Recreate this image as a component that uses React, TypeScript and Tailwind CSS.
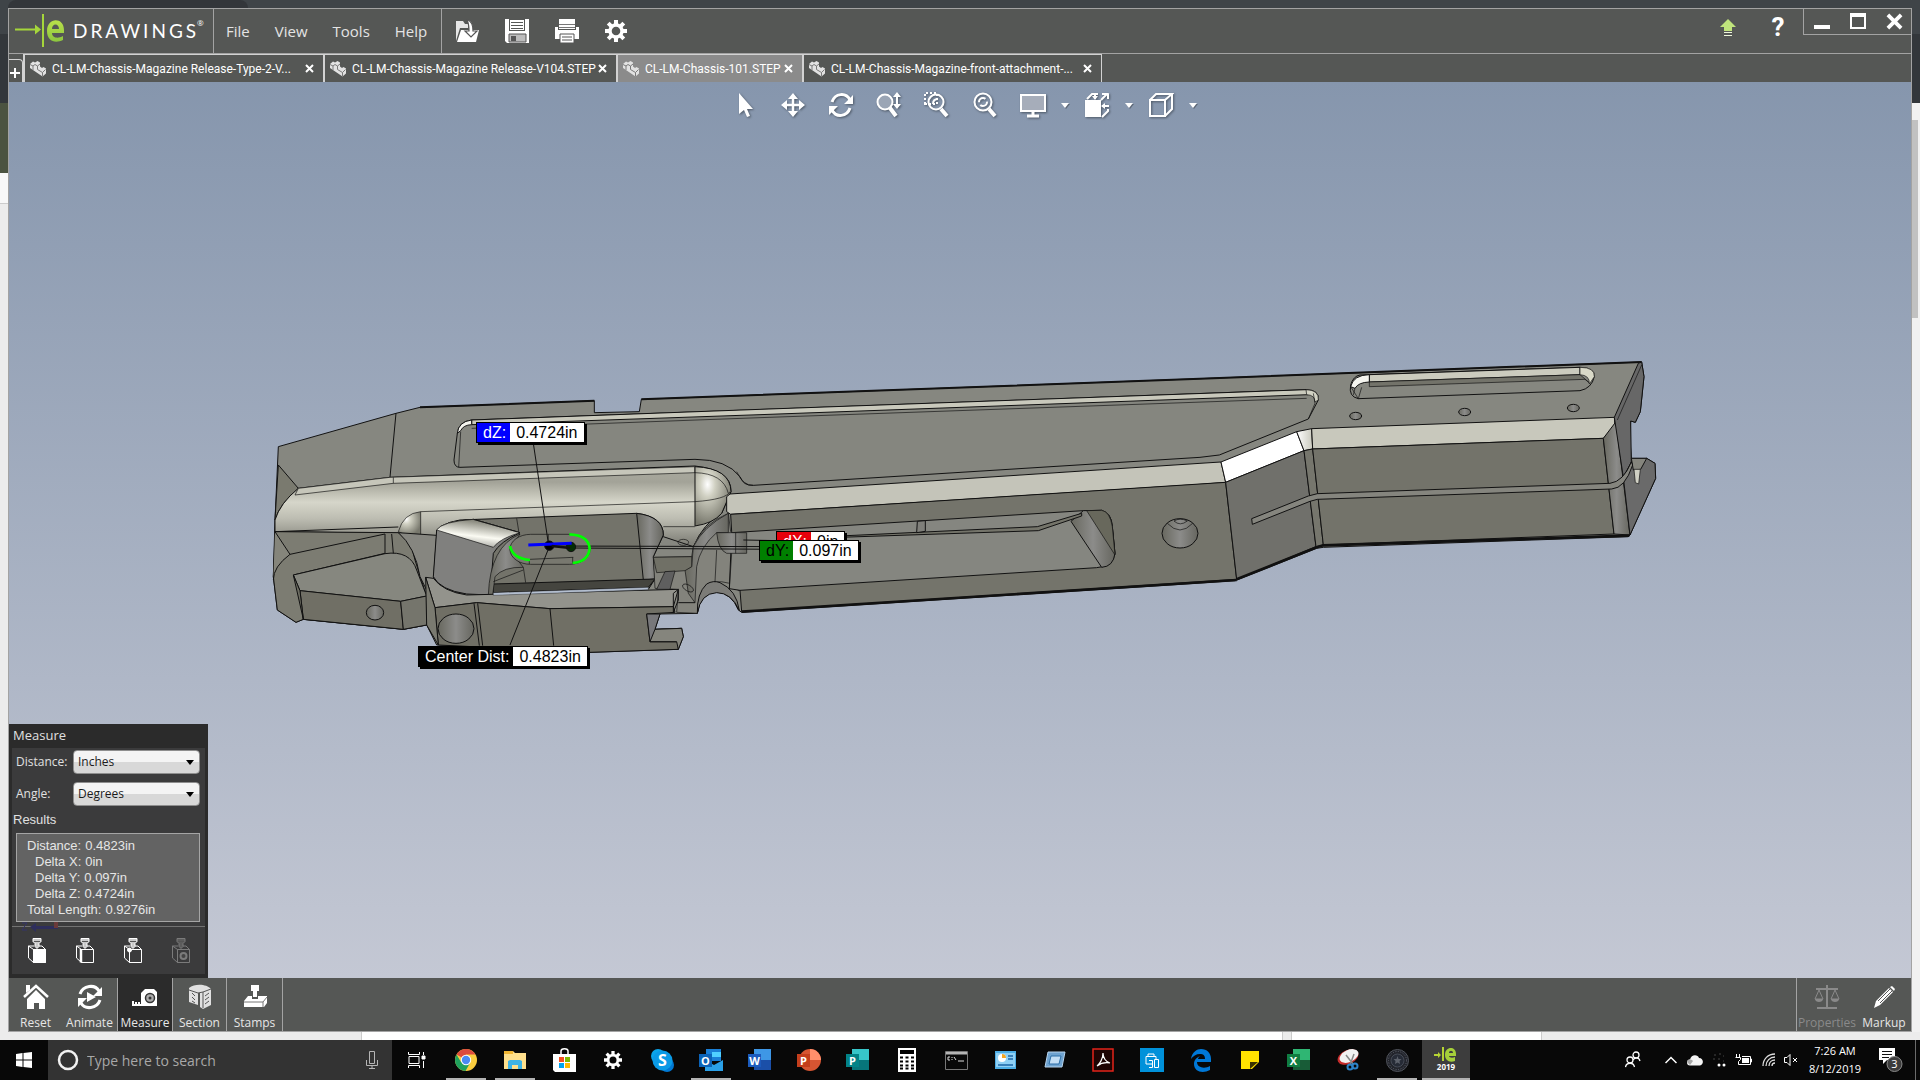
import { useState } from 'react';
import type { ReactNode } from 'react';

const tabs = [
  { name: 'CL-LM-Chassis-Magazine Release-Type-2-V...', width: 'w-[300px]' },
  { name: 'CL-LM-Chassis-Magazine Release-V104.STEP', width: 'w-[293px]' },
  { name: 'CL-LM-Chassis-101.STEP', width: 'w-[186px]' },
  { name: 'CL-LM-Chassis-Magazine-front-attachment-...', width: 'w-[299px]' },
];

function Logo() {
  return (
    <div className="flex w-[205px] items-center gap-2 border-r border-[#a3a3a3] pl-1.5">
      <svg width="50" height="36" viewBox="0 0 50 36">
        <defs>
          <linearGradient id="leaf" x1="0" y1="0" x2="0" y2="1">
            <stop offset="0" stopColor="#b9e04a" />
            <stop offset="1" stopColor="#8cc63f" />
          </linearGradient>
        </defs>
        <path d="M0 15.500h20v-4l6 5-6 5v-4H0z" fill="#a5d63b" />
        <path d="M27 1h2v33h-2z" fill="#a5d63b" />
        <path
          d="M48 23v4c-8 4-16 1-16-9C32 4 49 4 49 17v3H37c0 5 6 6 11 3zM37 16h7c0-6-7-6-7 0z"
          fill="url(#leaf)"
          fillRule="evenodd"
        />
      </svg>
      <span className="font-['Lato',sans-serif] text-[19px] leading-6 tracking-[3px] text-white">
        DRAWINGS
      </span>
      <span className="-ml-2.5 self-start pt-2 text-[8px] text-white">®</span>
    </div>
  );
}

function PartIcon() {
  return (
    <svg width="17" height="17" viewBox="0 0 17 17" className="shrink-0">
      <path d="M1 4l3-2.500 2 1L8.500 1 11 2.500v4L13 8l1.500-1L17 8.500v5L13.500 16.500 1 8z" fill="#e2e2e2" />
      <path d="M1 4.500l3 1.500 2-1.500M4 6v4M6 4.500L8.500 6 11 4M8.500 6v3.500l5 3 3-3M13.500 12.500v4" fill="none" stroke="#7a7a7a" />
    </svg>
  );
}

function CloseMark({ size = 9, thick = 2 }: { size?: number; thick?: number }) {
  return (
    <svg width={size} height={size} viewBox="0 0 9 9">
      <path d="M1 1l7 7M8 1l-7 7" stroke="#fff" strokeWidth={thick} fill="none" />
    </svg>
  );
}

function GearIcon({ size = 22 }: { size?: number }) {
  return (
    <svg width={size} height={size} viewBox="0 0 22 22">
      <circle cx="11" cy="11" r="6" fill="none" stroke="#fff" strokeWidth="3.400" />
      <g stroke="#fff" strokeWidth="4">
        <path d="M11 0v4M11 18v4M0 11h4M18 11h4M3.200 3.200l3 3M15.800 15.800l3 3M18.800 3.200l-3 3M3.200 18.800l3-3" />
      </g>
    </svg>
  );
}

function Header() {
  return (
    <header className="flex h-[45px] shrink-0 border-b border-[#a3a3a3]">
      <Logo />
      <nav className="flex w-[228px] items-center gap-[25px] border-r border-[#a3a3a3] pl-3 text-[15px] text-[#e4e4e4]">
        <button>File</button>
        <button>View</button>
        <button>Tools</button>
        <button>Help</button>
      </nav>
      <div className="flex items-center gap-[26px] pl-[13px]">
        <button aria-label="Open">
          <svg width="24" height="24" viewBox="0 0 24 24">
            <path d="M1 22V2h7l2 3h3v4H5z" fill="#e6e6e6" />
            <path d="M2 23l4-12h18l-3 12z" fill="#fff" />
            <path d="M12 1c5 1 6 5 6 11h4l-6 6-6-6h4c0-5 0-7-2-11z" fill="#fff" stroke="#555" strokeWidth="1.200" />
          </svg>
        </button>
        <button aria-label="Save">
          <svg width="24" height="24" viewBox="0 0 24 24">
            <path d="M0 0h24v24H2l-2-2z" fill="#fff" />
            <path d="M4 0h16v12H4z" fill="#555755" />
            <path d="M5 1h14v10H5z" fill="#fff" />
            <path d="M6 3.500h12M6 6.500h12M6 9.500h12" stroke="#555755" />
            <path d="M4 15h17v8H4z" fill="#bcbcbc" stroke="#555" />
            <path d="M6 17h5v5H6z" fill="#555" />
          </svg>
        </button>
        <button aria-label="Print">
          <svg width="24" height="24" viewBox="0 0 24 24">
            <path d="M4 0h16v10H4z" fill="#fff" />
            <path d="M4 5.500h16M4 8.500h16" stroke="#777" />
            <path d="M0 8h3v3h18V8h3v12H0z" fill="#fff" />
            <path d="M5 15h14v9H5z" fill="#fff" stroke="#555" />
            <path d="M7 18h10M7 21h10" stroke="#555" />
          </svg>
        </button>
        <button aria-label="Options">
          <GearIcon />
        </button>
      </div>
      <div className="ml-auto flex">
        <button aria-label="Update" className="flex w-[50px] items-start justify-center pt-2.5">
          <svg width="16" height="18" viewBox="0 0 16 18">
            <path d="M8 0l8 8h-4v4H4V8H0z" fill="#c0e47c" />
            <path d="M4 13.500h8M4 16.500h8" stroke="#eef6dd" />
          </svg>
        </button>
        <button className="w-[50px] self-start pt-0.5 font-['Roboto',sans-serif] text-[26px] leading-8 font-bold text-white">
          ?
        </button>
        <div className="flex h-[26px] items-start gap-5 border-b border-l border-[#a3a3a3] pt-1 pr-2 pl-2.5">
          <button aria-label="Minimize">
            <svg width="16" height="16"><path d="M0 12h16v4H0z" fill="#fff" /></svg>
          </button>
          <button aria-label="Maximize">
            <svg width="16" height="16"><path d="M0 0h16v16H0zM2 4v10h12V4z" fill="#fff" fillRule="evenodd" /></svg>
          </button>
          <button aria-label="Close">
            <CloseMark size={17} thick={2} />
          </button>
        </div>
      </div>
    </header>
  );
}

function TabBar() {
  const [active, setActive] = useState(2);
  return (
    <div className="flex h-7 shrink-0 items-end">
      <button
        aria-label="New tab"
        className="flex h-[23px] w-3.5 items-center justify-center rounded-tr border-t border-r border-[#d2d2d2] pt-1 pr-0.5"
      >
        <svg width="10" height="10"><path d="M4 0h2v4h4v2H6v4H4V6H0V4h4z" fill="#fff" /></svg>
      </button>
      {tabs.map((tab, i) => (
        <div
          key={tab.name}
          className={`${tab.width} flex h-7 items-center gap-1.5 border-t border-l-2 border-[#d2d2d2] pr-[9px] pl-1 ${
            i === active ? 'bg-[#8b8b8b]' : ''
          }`}
        >
          <PartIcon />
          <button
            onClick={() => setActive(i)}
            className="min-w-0 grow text-left font-['Roboto',sans-serif] text-[12px] leading-4 whitespace-nowrap text-white"
          >
            {tab.name}
          </button>
          <button aria-label={`Close ${tab.name}`}>
            <CloseMark />
          </button>
        </div>
      ))}
      <div className="h-7 border-l border-[#d2d2d2]" />
    </div>
  );
}

function Caret() {
  return (
    <svg width="8" height="5" viewBox="0 0 8 5" className="drop-shadow-[1px_1px_0_#5d6877]">
      <path d="M0 0h8L4 5z" fill="#fff" />
    </svg>
  );
}

function ViewButton({ label, children }: { label: string; children: ReactNode }) {
  return (
    <button aria-label={label} className="drop-shadow-[1px_1px_1px_#4d5866]">
      <svg width="26" height="26" viewBox="0 0 26 26" fill="none" stroke="#fff" strokeWidth="2">
        {children}
      </svg>
    </button>
  );
}

function ViewToolbar() {
  return (
    <div className="z-10 col-start-1 row-start-1 flex items-center justify-center self-start pt-2.5 pl-6">
      <div className="flex items-center gap-[22px]">
        <ViewButton label="Select">
          <path d="M7 1v21l5-4 3 7 3-1-3-7h6z" fill="#fff" stroke="none" />
        </ViewButton>
        <ViewButton label="Pan">
          <path d="M13 4v18M4 13h18" strokeWidth="2.500" />
          <path d="M13 1l5 6H8zM13 25l5-6H8zM1 13l6-5v10zM25 13l-6-5v10z" fill="#fff" stroke="none" />
        </ViewButton>
        <ViewButton label="Rotate">
          <path d="M4 10C7 1 18 0 22 8M22 16c-3 9-14 10-18 2" strokeWidth="3" />
          <path d="M25 3v9h-9zM1 23v-9h9z" fill="#fff" stroke="none" />
        </ViewButton>
        <ViewButton label="Zoom">
          <circle cx="9" cy="10" r="7.500" fill="#9aa5b5" />
          <path d="M14 16l6 8" strokeWidth="4" />
          <path d="M21 4v9" />
          <path d="M21 0l4 5h-8zM21 17l4-5h-8z" fill="#fff" stroke="none" />
        </ViewButton>
        <ViewButton label="Zoom to area">
          <path d="M1 12V1h12v11z" strokeDasharray="2 2" />
          <circle cx="12" cy="10" r="7.500" />
          <path d="M9 12c0-4 2-5 5-5" />
          <path d="M17 17l6 7" strokeWidth="4" />
        </ViewButton>
        <ViewButton label="Zoom to fit">
          <circle cx="11" cy="10" r="8.500" />
          <circle cx="11" cy="10" r="4" strokeDasharray="9 3" />
          <path d="M17 17l6 7" strokeWidth="4" />
        </ViewButton>
      </div>
      <div className="ml-[22px] flex items-center">
        <ViewButton label="Full screen">
          <path d="M1 3h24v16H1z" fill="#a6adba" />
          <path d="M13 19v5M7 24h12" strokeWidth="3" />
        </ViewButton>
        <button aria-label="Full screen options" className="flex w-[38px] justify-center">
          <Caret />
        </button>
        <ViewButton label="View orientation">
          <path d="M1 8h16v17H1z" fill="#fff" stroke="none" />
          <path d="M3 7l5-5h6M18 2h5l-6 6M24 2v5M24 17v2l-6 6M11 1v6M25 14h-7" />
          <path d="M8 4h6l-3 4zM21 11v6l-4-3z" fill="#fff" stroke="none" />
        </ViewButton>
        <button aria-label="View orientation options" className="flex w-[38px] justify-center">
          <Caret />
        </button>
        <ViewButton label="Display style">
          <path d="M2 8h15v16H2zM2 8l6-6h16l-7 6M24 2v15l-7 7" />
        </ViewButton>
        <button aria-label="Display style options" className="flex w-[38px] justify-center">
          <Caret />
        </button>
      </div>
    </div>
  );
}

/* The part is drawn at three times the screen scale, from the corner of its left end. */
function ModelView() {
  return (
    <svg
      viewBox="9 82 1902 896"
      preserveAspectRatio="xMinYMin meet"
      className="col-start-1 row-start-1 w-full"
      role="img"
      aria-label="3D model"
    >
      <defs>
        <linearGradient id="barrel" x1="0" y1="0" x2="0" y2="1">
          <stop offset="0" stopColor="#a9a99e" />
          <stop offset=".2" stopColor="#a3a398" />
          <stop offset=".45" stopColor="#d6d6ca" />
          <stop offset=".65" stopColor="#bdbdb2" />
          <stop offset=".95" stopColor="#82827a" />
        </linearGradient>
        <radialGradient id="nose" cx=".35" cy=".3" r=".7">
          <stop offset="0" stopColor="#fff" />
          <stop offset=".3" stopColor="#d0d0c2" />
          <stop offset="1" stopColor="#77776c" />
        </radialGradient>
        <linearGradient id="shine" x1="0" y1="1" x2=".35" y2="0">
          <stop offset="0" stopColor="#7f7f7b" />
          <stop offset=".5" stopColor="#fbfbf3" />
          <stop offset="1" stopColor="#85857a" />
        </linearGradient>
        <linearGradient id="round" x1="0" x2="1">
          <stop offset="0" stopColor="#68685f" />
          <stop offset=".5" stopColor="#8c8c8a" />
          <stop offset="1" stopColor="#66665f" />
        </linearGradient>
        <linearGradient id="corner" x1="0" x2="1">
          <stop offset="0" stopColor="#fff" />
          <stop offset="1" stopColor="#c8c8bc" />
        </linearGradient>
      </defs>
      <g transform="translate(260 380) scale(.333333)" stroke="#111" strokeWidth="3" strokeLinejoin="round" fill="none">
        {/* outline */}
        <path
          d="M55 200L408 100 480 82 1003 62V98L1138 95 1144 58 2820-4 4145-54 4152-10 4141 95 4126 127 4112 123 4110 180 4114 235H4160L4185 250 4187 295 4110 465 4105 470 3190 502 3170 505 2925 602 2760 613 1445 697 1435 690Q1415 640 1370 636 1320 640 1312 700L1200 702 1185 748 1265 745 1270 770 1255 808 990 817 530 795 500 735 430 748 130 718 108 727 52 690 40 590 45 420Z"
          fill="#868780"
        />
        <path d="M480 82L1003 62M1144 58L2820-4 4145-54" strokeWidth="6" />
        <path d="M408 100L390 292" />
        <path d="M55 255L115 325Q60 370 45 420Z" fill="#7a7a6f" />

        {/* top pocket */}
        <path d="M635 120Q595 125 592 160L582 240Q582 262 600 262L1305 238Q1400 238 1440 290 1450 318 1480 316L2820 232 2878 225 3145 117 3175 60Q3178 30 3140 29Z" fill="#85867f" />
        <path d="M635 120L1500 88 3140 29 3145 44 1500 104 635 134Z" fill="#c9c9bc" />
        <path d="M3138 29Q3178 30 3175 60L3165 66Q3165 45 3140 44Z" fill="#d2d2c4" strokeWidth="2" />
        <path d="M635 145L1500 113 3140 55" strokeWidth="2" />
        <path d="M635 120Q595 125 592 160L602 152Q610 135 635 134Z" fill="#f4f4ee" />
        <path d="M602 155L596 262M1430 275Q1450 318 1480 316M3160 40L3165 70 3145 117" strokeWidth="2" />

        {/* barrel shaped cover */}
        <path d="M115 325L390 292 1305 258Q1415 270 1413 335L1385 400Q1330 430 1300 500L1210 470 480 468 415 460 45 455 45 420Q60 370 115 325Z" fill="url(#barrel)" />
        <path d="M115 325L390 292 1305 260V278L400 310 105 345Z" fill="#c6c6ba" strokeWidth="2" />
        <path d="M1305 260Q1412 265 1413 335L1385 400Q1360 430 1305 438Z" fill="url(#nose)" />
        <path d="M482 395L1305 365Q1400 358 1410 335M1305 278Q1390 280 1405 340M400 292V310M1305 440L1210 440" strokeWidth="2" />
        <path d="M415 455Q430 400 482 395V468Q440 470 415 455Z" fill="url(#nose)" strokeWidth="2" />

        {/* lower left grip */}
        <path d="M45 455L415 458Q455 480 465 540L500 650V735L430 748 130 718 108 727 52 690 40 590Z" fill="#7c7c72" />
        <path d="M45 455L90 523Q40 560 40 600" fill="#85857b" />
        <path d="M90 523L375 462V520L100 585" />
        <path d="M100 585L375 521Q450 510 470 570L500 648 422 664 120 632Z" fill="#86877f" />
        <path d="M120 632L422 664 430 748 130 718Z" fill="#706f65" />
        <path d="M422 664L500 648V735L430 748Z" fill="#75756c" />
        <path d="M100 585L120 632 130 718Z" fill="#6d6d62" />
        <path d="M395 462L400 520M45 455L415 441" />
        <ellipse cx="345" cy="698" rx="26" ry="22" fill="url(#round)" />

        {/* window under the cover */}
        <path d="M415 458L530 466 520 600 525 682Q505 640 480 590 465 500 415 458Z" fill="#868680" />
        <path d="M530 465Q535 430 600 420L1130 400Q1210 410 1210 465L1180 530 1185 597 1165 628 700 645 540 635Z" fill="#73736a" />
        <path d="M1130 400Q1210 410 1210 465L1180 530 1185 597 1150 600Z" fill="url(#round)" />
        <path d="M700 612L1185 597 1165 622 700 638Z" fill="#45453f" />
        <path d="M530 450Q545 425 640 418L780 458Q720 485 700 520L690 645 620 642Q540 630 520 590Z" fill="#80807e" />
        <path d="M530 450Q545 425 640 418L780 458Q720 475 700 502Z" fill="url(#shine)" strokeWidth="2" />
        <path d="M780 462Q690 500 685 645H698L705 590Q730 560 790 562L750 510Z" fill="url(#round)" strokeWidth="2" />
        <path d="M770 415L778 465M790 562L797 608M700 605L790 570M640 418L770 455" strokeWidth="2" />
        <rect x="750" y="463" width="240" height="90" rx="62" ry="44" fill="#78786f" strokeWidth="2" />
        <path d="M865 463V490M810 538L940 532M808 538V552M938 532V550" strokeWidth="2" />

        {/* lower rail */}
        <path d="M497 592L520 595Q550 635 620 645L1255 628 1240 680 870 686 650 668 525 683Z" fill="#93938c" />
        <path d="M700 638L1165 622V629L700 646Z" fill="#b4bfd0" strokeWidth="1" />
        <path d="M525 683L650 668 870 686 1240 680 1245 697 1160 702 1170 785 1255 785V808L990 817 535 795Z" fill="#706f65" />
        <path d="M1160 702H1200L1185 748 1265 745 1250 785H1170Z" fill="#77777a" />
        <path d="M1185 748L1265 745 1270 770 1255 808 1250 785H1170Z" fill="#85857d" />
        <path d="M497 592L525 683 535 795 500 735Z" fill="#7a7a70" />
        <path d="M642 670L658 797M653 670L668 797M870 686L881 797" />
        <ellipse cx="588" cy="746" rx="54" ry="44" fill="url(#round)" />

        {/* joint between the halves */}
        <path d="M1180 532L1295 530 1300 500Q1330 430 1405 400L1412 455 1500 450V628L1435 632Q1415 600 1360 606 1320 640 1312 700L1250 697 1255 628 1185 625Z" fill="#83837c" strokeWidth="2" />
        <path d="M1300 500Q1330 440 1405 400V458H1370Q1320 500 1310 560L1305 668 1285 640 1275 570 1295 560Z" fill="url(#round)" strokeWidth="2" />
        <path d="M1180 532L1295 530V560L1275 572 1190 578Z" fill="#707066" strokeWidth="2" />
        <path d="M1215 575L1245 573 1230 628H1190Z" fill="#5f5f5f" strokeWidth="2" />
        <path d="M1312 700Q1310 640 1340 612 1360 600 1380 608 1430 630 1438 692 1415 638 1370 638 1322 640 1312 700Z" fill="#7c7c78" />
        <ellipse cx="1270" cy="487" rx="16" ry="9" strokeWidth="2" />
        <ellipse cx="1284" cy="624" rx="18" ry="9" transform="rotate(30 1284 624)" strokeWidth="2" />
        <path d="M1240 640L1255 628V660L1240 697ZM1305 668H1255" />

        {/* long side */}
        <path d="M1410 342L2820 250 2883 246 2897 307 2820 313 1412 403 1400 395V350Z" fill="#c4c4b9" />
        <path d="M1412 403L2897 307 2930 598 1445 695 1440 630 1415 455Z" fill="#74746b" />
        <path d="M1415 458L2470 392 2525 391Q2555 400 2557 440L2565 520Q2560 560 2510 563L1440 631 1408 626Z" fill="#858680" />
        <path d="M2470 392L2525 391Q2555 400 2557 440L2565 520Q2560 560 2525 562L2433 424Z" fill="url(#round)" />
        <path d="M2480 392L2565 525 2557 440Q2550 395 2525 391Z" fill="#68685c" strokeWidth="2" />
        <path d="M1740 468L2332 440 2465 400V408L2335 452 1740 472Z" fill="#74746a" />
        <path d="M1972 424L1970 458 1996 454V422Z" fill="#7f7f7a" />
        <path d="M1370 458H1460V520H1400Q1375 510 1370 458Z" fill="url(#round)" strokeWidth="2" />
        <path d="M1427 458V520M1370 510L1365 606M1415 520L1408 628" strokeWidth="2" />
        <path d="M1445 695L2930 600" strokeWidth="8" />
        <ellipse cx="2760" cy="460" rx="54" ry="44" fill="url(#round)" />
        <path d="M2722 430Q2760 470 2798 430M2742 423Q2760 440 2782 423 2760 412 2742 423" strokeWidth="2" />

        {/* raised rear block */}
        <g transform="translate(2760 -120)">
          <path d="M123 366L350 275 372 332 137 427Z" fill="#fff" />
          <path d="M350 275L395 266 398 327 372 332Z" fill="url(#corner)" />
          <path d="M395 266L1303 232 1305 260 1270 295 398 327Z" fill="#c8c8bc" />
          <path d="M137 427L372 332 408 620 170 718Z" fill="#70706b" />
          <path d="M372 332L398 327 430 615 408 620Z" fill="#76766d" />
          <path d="M398 327L1270 295 1302 582 430 615Z" fill="#73736a" />
          <path d="M1270 295L1308 245 1350 585 1302 582Z" fill="url(#round)" />
          <path d="M1303 232L1375 70 1385 66 1392 110 1381 215 1366 247 1352 243 1354 370 1330 412Z" fill="#676767" />
          <path d="M1312 240L1385 75" strokeWidth="2" />
          <path d="M1330 412L1354 366 1400 355 1425 370 1427 415 1350 585Z" fill="#6a6a6a" />
          <path d="M1354 355H1400L1382 388 1360 390Z" fill="#85857d" />
          <path d="M1362 388H1381L1376 432 1366 428Z" fill="#d0d0c4" strokeWidth="2" />
          <path d="M215 536L385 468 412 461 1290 430Q1330 425 1354 366L1358 375Q1335 445 1295 447L412 478 390 484 217 553Z" fill="#85857e" />
          <path d="M170 718L410 622 430 616 1348 587" strokeWidth="8" />
          <path d="M540 105L1200 82Q1245 82 1243 110 1235 145 1200 152L535 176Q505 170 512 135 520 108 540 105Z" fill="#868780" />
          <path d="M568 104L1200 82V104L568 126Z" fill="#cbcbbe" />
          <path d="M568 126L1200 104 1230 130 1215 118 568 140Z" fill="#73736a" strokeWidth="2" />
          <path d="M568 104Q520 105 512 140L525 145Q535 127 568 126Z" fill="#f5f5ef" />
          <path d="M1200 82Q1245 82 1243 110L1228 132Q1230 106 1200 104Z" fill="#d9d9c8" strokeWidth="2" />
          <path d="M512 140L535 176M525 145L520 165M545 142L535 176" strokeWidth="2" />
          <g fill="url(#round)">
            <ellipse cx="527" cy="228" rx="18" ry="11" />
            <ellipse cx="854" cy="216" rx="18" ry="11" />
            <ellipse cx="1180" cy="204" rx="18" ry="11" />
          </g>
        </g>

        {/* measurement */}
        <path d="M820 190L865 490 868 500 750 795M868 498L1560 500M935 504L1560 508M1450 480L1560 482" />
        <circle cx="868" cy="497" r="14" fill="#000" />
        <circle cx="933" cy="501" r="14" fill="#052c05" />
        <path d="M805 495L935 490" stroke="#00f" strokeWidth="9" />
        <path d="M875 498L930 504" strokeWidth="7" />
        <path d="M750 498Q757 535 810 540M928 463Q985 465 989 505 985 545 938 549" stroke="#0f0" strokeWidth="8" />
      </g>
    </svg>
  );
}

function Callout({ name, value, place, color }: { name: string; value: string; place: string; color: string }) {
  return (
    <div
      className={`${place} absolute flex h-[21px] border border-black text-base leading-5 whitespace-nowrap shadow-[2px_2px_0_#000] font-['Liberation_Sans',Arial,sans-serif]`}
    >
      <span className={`${color} pr-1 pl-1.5`}>{name}</span>
      <span className="bg-white px-1.5 text-black">{value}</span>
    </div>
  );
}

const unitSelect =
  'col-start-1 row-start-1 h-6 w-full appearance-none rounded-sm border border-[#8e8e8e] bg-linear-to-b from-[#f4f4f4] from-50% to-[#d8d8d8] to-50% pl-1 text-[12px] text-[#1c1c1c]';

function UnitRow({ id, label, options }: { id: string; label: string; options: string[] }) {
  return (
    <div className="flex h-6 items-center">
      <label htmlFor={id} className="w-[57px] text-[12px] leading-4 text-[#e0e0e0]">
        {label}
      </label>
      <div className="grid w-[127px] items-center">
        <select id={id} className={unitSelect}>
          {options.map((o) => (
            <option key={o}>{o}</option>
          ))}
        </select>
        <svg width="8" height="5" className="pointer-events-none col-start-1 row-start-1 mr-1.5 justify-self-end">
          <path d="M0 0h8L4 5z" fill="#000" />
        </svg>
      </div>
    </div>
  );
}

function SelectionIcon({ kind }: { kind: 'face' | 'edge' | 'point' | 'hole' }) {
  const ink = kind === 'hole' ? '#7b7b7b' : '#fff';
  return (
    <svg width="18" height="25" viewBox="0 0 18 25" fill="none" stroke={ink} strokeWidth="1">
      <path d="M5.500 11.500h12v13h-12zM.5 8l5 3.500v13L.5 20zM.5 8H6M11 8h3l3.500 3.500" />
      <path d="M5 .5h8v3l-2 2v3l-2 2-2-2v-3l-2-2z" fill={kind === 'hole' ? '#5c5c5c' : '#c9c9c9'} />
      <path d="M6 3.500h6" stroke="#555" />
      {kind === 'face' && <path d="M5.500 11.500h12v13h-12z" fill="#fff" />}
      {kind === 'edge' && <path d="M5 11v13.500" strokeWidth="2.500" />}
      {kind === 'point' && <circle cx="5.500" cy="12" r="2" fill="#fff" />}
      {kind === 'hole' && <circle cx="11.500" cy="18" r="3" fill="#444" strokeWidth="2" />}
    </svg>
  );
}

function MeasurePanel() {
  return (
    <section className="z-10 col-start-1 row-start-1 flex w-[199px] flex-col self-end bg-[#2b2b2b] px-[3px] pb-1">
      <h2 className="h-6 pl-px text-[13px] leading-[22px] text-[#e0e0e0]">Measure</h2>
      <div className="bg-[#3b3b3c] pt-0.5">
        <div className="flex flex-col gap-2 px-1">
          <UnitRow id="distance" label="Distance:" options={['Inches', 'Millimeters']} />
          <UnitRow id="angle" label="Angle:" options={['Degrees', 'Radians']} />
        </div>
        <h3 className="mt-0.5 pl-px font-['Liberation_Sans',Arial,sans-serif] text-[13px] leading-6 text-[#e0e0e0]">
          Results
        </h3>
        <dl className="mr-[5px] ml-1 mt-px h-[89px] border border-[#a5a5a5] bg-[#636363] pt-1 pl-2.5 font-['Liberation_Sans',Arial,sans-serif] text-[13px] leading-4 text-[#e6e6e6]">
          <div className="flex gap-1"><dt>Distance:</dt><dd>0.4823in</dd></div>
          <div className="flex gap-1 pl-2"><dt>Delta X:</dt><dd>0in</dd></div>
          <div className="flex gap-1 pl-2"><dt>Delta Y:</dt><dd>0.097in</dd></div>
          <div className="flex gap-1 pl-2"><dt>Delta Z:</dt><dd>0.4724in</dd></div>
          <div className="flex gap-1"><dt>Total Length:</dt><dd>0.9276in</dd></div>
        </dl>
        <svg width="60" height="10" className="-mb-2.5 ml-2">
          <path d="M10 5l6-4v3h22v3H16v3z" fill="#2e2e5b" />
          <path d="M2 1h5L2 8h5" fill="none" stroke="#34346a" />
          <path d="M34 0h4v6h-4z" fill="#6a3a3a" />
        </svg>
        <div className="mt-1 flex h-12 items-center gap-[30px] border-t border-[#727272] pl-4">
          <button aria-label="Select face"><SelectionIcon kind="face" /></button>
          <button aria-label="Select edge"><SelectionIcon kind="edge" /></button>
          <button aria-label="Select point"><SelectionIcon kind="point" /></button>
          <button aria-label="Select hole" disabled><SelectionIcon kind="hole" /></button>
        </div>
      </div>
    </section>
  );
}

function ToolButton({ label, className, children }: { label: string; className: string; children: ReactNode }) {
  return (
    <button className={`flex h-[53px] flex-col items-center justify-between pt-1.5 text-[12px] leading-4 ${className}`}>
      <svg width="26" height="26" viewBox="0 0 26 26" fill="none">
        {children}
      </svg>
      {label}
    </button>
  );
}

function BottomToolbar() {
  return (
    <footer className="flex shrink-0 justify-between text-[#e6e6e6]">
      <div className="flex">
        <ToolButton label="Reset" className="w-[53px]">
          <path d="M1 13L13 2l12 11" stroke="#fff" strokeWidth="2.500" />
          <path d="M3 1h4v5L3 9z" fill="#fff" />
          <path d="M13 6l9 9v10h-6v-6h-5v6H4V15z" fill="#fff" />
        </ToolButton>
        <ToolButton label="Animate" className="w-14 border-r border-[#a3a3a3]">
          <path d="M3 10C6 1 18 0 22 7M23 16c-3 9-15 10-19 3" stroke="#fff" strokeWidth="3" />
          <path d="M25 3v9h-9zM1 23v-9h9zM10 8l9 5-9 5z" fill="#fff" />
        </ToolButton>
        <ToolButton label="Measure" className="w-[54px] bg-[#2b2b2b]">
          <path d="M9 22V9l4-4h9l3 3v14z" fill="#fff" />
          <circle cx="18" cy="14" r="4.500" fill="#aaa" stroke="#333" strokeWidth="1.500" />
          <circle cx="18" cy="14" r="1.500" fill="#333" />
          <path d="M10 21H1v-4M4 21v-3M7 21v-3" stroke="#fff" strokeWidth="2" />
        </ToolButton>
        <ToolButton label="Section" className="w-[55px] border-x border-[#a3a3a3]">
          <path d="M2 4c6-5 18-4 22 1v16l-8 4-3-2V9h-2v12l-9-3z" fill="#e0e0e0" />
          <path d="M2 6l9 3 5-1 8-3M16 8v16M5 9l3 3M5 13l3 3M5 17l3 2M18 12l4-3M18 16l4-3M18 20l4-3" stroke="#555" />
        </ToolButton>
        <ToolButton label="Stamps" className="w-14 border-r border-[#a3a3a3]">
          <path d="M9 1h8v6h-2v6h-4V7H9z" fill="#fff" />
          <path d="M2 17l4-5h4v3h6v-3h9v7l-3 4H2z" fill="#fff" />
          <path d="M2 18h19l4-5M21 18v5" stroke="#777" />
        </ToolButton>
      </div>
      <div className="flex border-l border-[#a3a3a3]">
        <ToolButton label="Properties" className="w-[60px] text-[#8a8a8a]">
          <path d="M13 1v22M2 5h22M3 24h20" stroke="#8a8a8a" strokeWidth="2" />
          <path d="M5 6L1 15h8L5 6zM21 6l-4 9h8l-4-9z" stroke="#8a8a8a" />
          <path d="M1 15h8c0 4-8 4-8 0zM17 15h8c0 4-8 4-8 0z" fill="#8a8a8a" />
        </ToolButton>
        <ToolButton label="Markup" className="w-[54px]">
          <path d="M3 24l2-7L18 4l4 4L9 21z" fill="#fff" />
          <path d="M19 3l2-1 3 3-1 2z" fill="#fff" />
          <path d="M7 17L19 5M9 19L21 7" stroke="#555" />
        </ToolButton>
      </div>
    </footer>
  );
}

function OfficeIcon({ letter, dark, mid, light }: { letter: string; dark: string; mid: string; light: string }) {
  return (
    <svg width="24" height="24" viewBox="0 0 24 24">
      <path d="M6 1h17v11H6z" fill={light} />
      <path d="M6 12h17v10H6z" fill={mid} />
      <path d="M0 6h13v13H0z" fill={dark} />
      <text x="6.500" y="16.500" textAnchor="middle" fontSize="11" fontWeight="700" fill="#fff">
        {letter}
      </text>
    </svg>
  );
}

const taskbarApps: { name: string; running?: boolean; active?: boolean; icon: ReactNode }[] = [
  {
    name: 'Task View',
    icon: (
      <svg width="18" height="18" viewBox="0 0 18 18" fill="none" stroke="#fff">
        <path d="M.5 1v2.500h11V1M1 5.500h10v7H1zM.5 17v-2.500h11V17M15.500 1v3M15.500 10v7" />
        <path d="M14 5h3v3h-3z" fill="#fff" />
      </svg>
    ),
  },
  {
    name: 'Chrome',
    running: true,
    icon: (
      <svg width="22" height="22" viewBox="0 0 22 22">
        <circle cx="11" cy="11" r="11" fill="#fbcd3f" />
        <path d="M11 11L1.500 5.500A11 11 0 0 1 20.500 5.500H11z" fill="#dd4b3e" />
        <path d="M11 11L6 13 1.500 5.500A11 11 0 0 0 10.500 22l4.500-8z" fill="#1fa15d" />
        <circle cx="11" cy="11" r="5.200" fill="#fff" />
        <circle cx="11" cy="11" r="4.200" fill="#4a8af4" />
      </svg>
    ),
  },
  {
    name: 'File Explorer',
    running: true,
    icon: (
      <svg width="22" height="20" viewBox="0 0 22 20">
        <path d="M0 1h9l2 2h11v16H0z" fill="#ffe08c" />
        <path d="M0 1h9v3H0z" fill="#f2b632" />
        <path d="M4 19v-8l2-1h10l2 1v8h-4v-4H8v4z" fill="#3fb3e4" />
      </svg>
    ),
  },
  {
    name: 'Store',
    icon: (
      <svg width="23" height="24" viewBox="0 0 23 24">
        <path d="M8 7V3c0-3 7-3 7 0v4" fill="none" stroke="#fff" strokeWidth="1.500" />
        <path d="M0 6h23v18H2l-2-2z" fill="#fff" />
        <path d="M6 9h5v5H6z" fill="#f25022" />
        <path d="M12 9h5v5h-5z" fill="#7fba00" />
        <path d="M6 15h5v5H6z" fill="#00a4ef" />
        <path d="M12 15h5v5h-5z" fill="#ffb900" />
      </svg>
    ),
  },
  { name: 'Settings', icon: <GearIcon size={18} /> },
  {
    name: 'Skype',
    icon: (
      <svg width="23" height="23" viewBox="0 0 23 23">
        <circle cx="7" cy="7" r="7" fill="#0aa5ea" />
        <circle cx="16" cy="16" r="7" fill="#0078d4" />
        <circle cx="11.500" cy="11.500" r="10" fill="#0a9ae6" />
        <text x="11.500" y="17" textAnchor="middle" fontSize="16" fontWeight="700" fill="#fff">S</text>
      </svg>
    ),
  },
  {
    name: 'Outlook',
    running: true,
    icon: (
      <svg width="24" height="24" viewBox="0 0 24 24">
        <path d="M7 1h15v12H7z" fill="#1a7fd6" />
        <path d="M13 4h9v5h-9z" fill="#50d0ff" />
        <path d="M6 12l9 5 9-5v11H6z" fill="#2aa0e8" />
        <path d="M0 6h13v13H0z" fill="#0b63b8" />
        <text x="6.500" y="16.500" textAnchor="middle" fontSize="11" fontWeight="700" fill="#fff">O</text>
      </svg>
    ),
  },
  { name: 'Word', icon: <OfficeIcon letter="W" dark="#1c5bbd" mid="#1b4fa8" light="#3e97e6" /> },
  {
    name: 'PowerPoint',
    icon: (
      <svg width="24" height="24" viewBox="0 0 24 24">
        <circle cx="13" cy="12" r="11" fill="#d65532" />
        <path d="M13 1a11 11 0 0 1 11 11H13z" fill="#ff8f6b" />
        <path d="M0 6h13v13H0z" fill="#c43e1c" />
        <text x="6.500" y="16.500" textAnchor="middle" fontSize="11" fontWeight="700" fill="#fff">P</text>
      </svg>
    ),
  },
  { name: 'Publisher', icon: <OfficeIcon letter="P" dark="#038387" mid="#07757a" light="#37c6c9" /> },
  {
    name: 'Calculator',
    icon: (
      <svg width="18" height="24" viewBox="0 0 18 24">
        <path d="M0 0h18v24H0z" fill="#fff" />
        <path d="M2 2h14v4H2z" fill="#000" />
        <path d="M2 9.500h14M2 13.500h14M2 17.500h14M2 20.500h14" stroke="#000" strokeWidth="2" strokeDasharray="3 2.500" />
      </svg>
    ),
  },
  {
    name: 'Command Prompt',
    icon: (
      <svg width="23" height="19" viewBox="0 0 23 19">
        <path d="M.5.5h22v18H.5z" fill="#080808" stroke="#777" />
        <path d="M1 1h21v2.500H1z" fill="#b5b5b5" />
        <path d="M5 6H3v3h2M7 6v1M7 8v1M9 6l2 3M13 10h6" stroke="#ddd" fill="none" />
      </svg>
    ),
  },
  {
    name: 'Control Panel',
    icon: (
      <svg width="21" height="18" viewBox="0 0 21 18">
        <path d="M0 0h21v18H0z" fill="#4eaee6" />
        <path d="M1 2h19v14H1z" fill="#8fd0f5" />
        <circle cx="7" cy="7" r="4" fill="#fff" />
        <path d="M7 7V3a4 4 0 0 1 4 4z" fill="#f5a623" />
        <path d="M13 5h5M13 8h5M3 14h15" stroke="#1d66a8" strokeWidth="1.500" />
      </svg>
    ),
  },
  {
    name: 'Run',
    icon: (
      <svg width="23" height="18" viewBox="0 0 23 18">
        <path d="M5 1h17l-3 15H2z" fill="#6fa3d0" stroke="#b7d4ee" />
        <path d="M8 5h10l-2 8H6z" fill="#c3def5" stroke="#2d6fa8" />
      </svg>
    ),
  },
  {
    name: 'Acrobat',
    icon: (
      <svg width="22" height="24" viewBox="0 0 22 24">
        <path d="M1 1h20v22H1z" fill="#1d0403" stroke="#e2231a" strokeWidth="1.500" />
        <path d="M5 18c3-2 6-8 6-13 0 5 3 9 7 10-5-1-9 0-13 3z" fill="none" stroke="#fff" strokeWidth="1.200" />
      </svg>
    ),
  },
  {
    name: 'Print and Scan',
    icon: (
      <svg width="24" height="24" viewBox="0 0 24 24">
        <path d="M0 0h24v24H0z" fill="#0091da" />
        <path d="M8 8V6h6v2M12 16H6V8.500h10V11M14.500 11.500h4v8h-4zM9 12.500h3.500v7H9" fill="none" stroke="#fff" />
      </svg>
    ),
  },
  {
    name: 'Edge',
    icon: (
      <svg width="20" height="23" viewBox="0 0 20 23">
        <path
          d="M0 10C1 3 6 0 10 0c6 0 10 4 10 10v3H6c0 6 8 7 13 4v4C12 25 3 23 3 15c0-5 4-7 6-8-1 1-2 2-2 3h7c0-4-2-5-5-5-4 0-7 2-9 5z"
          fill="#0078d7"
        />
      </svg>
    ),
  },
  {
    name: 'Sticky Notes',
    icon: (
      <svg width="18" height="22" viewBox="0 0 18 22">
        <path d="M0 2h18v11l-7 7H0z" fill="#ffe100" />
        <path d="M9 20v-7h8z" fill="#3a3300" />
      </svg>
    ),
  },
  { name: 'Excel', icon: <OfficeIcon letter="X" dark="#107c41" mid="#185c37" light="#2fb673" /> },
  {
    name: 'Snipping Tool',
    icon: (
      <svg width="24" height="24" viewBox="0 0 24 24">
        <ellipse cx="12" cy="9" rx="11" ry="7" transform="rotate(-25 12 9)" fill="#c62b2b" />
        <ellipse cx="13" cy="8" rx="10" ry="6" transform="rotate(-25 13 8)" fill="#f1f1f1" />
        <path d="M10 7l7 9M18 6l-4 11" stroke="#888" strokeWidth="1.500" />
        <g fill="none" stroke="#2d83c9" strokeWidth="2">
          <circle cx="14" cy="19" r="2.500" />
          <circle cx="19" cy="18" r="2.500" />
        </g>
      </svg>
    ),
  },
  {
    name: 'Seal',
    running: true,
    icon: (
      <svg width="23" height="23" viewBox="0 0 23 23" fill="none">
        <circle cx="11.500" cy="11.500" r="11" fill="#22242b" stroke="#50545c" />
        <circle cx="11.500" cy="11.500" r="9" stroke="#606470" strokeDasharray="1 1.500" />
        <circle cx="11.500" cy="11.500" r="6.500" fill="#262b36" stroke="#464b56" />
        <path d="M11.500 7l1 3h3l-2 2 .5 3-2.500-1.500L9 15l.5-3-2-2h3z" fill="#5c616b" />
      </svg>
    ),
  },
  {
    name: 'eDrawings 2019',
    running: true,
    active: true,
    icon: (
      <svg width="26" height="28" viewBox="0 0 26 28">
        <path d="M1 8h4V6l3 3-3 3v-2H1zM9 1h2v14H9z" fill="#b5d334" />
        <path
          d="M22 11v4c-6 2-10-1-10-6C12 0 23 0 23 8v2h-7c0 2 4 2 6 1zM16 7h4c0-3-4-3-4 0z"
          fill="#a5cf3a"
          fillRule="evenodd"
        />
        <text x="13" y="24" textAnchor="middle" fontSize="8" fontWeight="700" fill="#fff">2019</text>
      </svg>
    ),
  },
];

function Taskbar() {
  return (
    <div className="flex h-10 shrink-0 bg-[#080808]">
      <button aria-label="Start" className="flex w-12 items-center justify-center">
        <svg width="16" height="16" viewBox="0 0 16 16">
          <path d="M0 2l6.500-1v6.500H0zM7.500 1L16 0v7.500H7.500zM0 8.500h6.500V15L0 14zM7.500 8.500H16V16l-8.500-1z" fill="#fff" />
        </svg>
      </button>
      <div className="flex w-[344px] items-center bg-[#333] pr-3.5 pl-[9px]">
        <svg width="22" height="22" viewBox="0 0 22 22">
          <circle cx="11" cy="11" r="9" fill="none" stroke="#f2f2f2" strokeWidth="2.500" />
        </svg>
        <input
          aria-label="Search"
          placeholder="Type here to search"
          className="ml-2 min-w-0 grow bg-transparent text-[14px] placeholder:text-[#a8a8a8]"
        />
        <svg width="12" height="18" viewBox="0 0 12 18" fill="none" stroke="#b5b5b5">
          <path d="M3.500.5h5v12h-5zM.5 9v5.500h11V9M6 14.500V17M3 17.500h6" />
        </svg>
      </div>
      <div className="flex gap-px pl-px">
        {taskbarApps.map((app) => (
          <button
            key={app.name}
            aria-label={app.name}
            className={`flex w-12 flex-col items-center ${app.active ? 'bg-[#3d3d3d]' : ''}`}
          >
            <span className="flex h-[38px] items-center pt-0.5">{app.icon}</span>
            {app.running && <span className={`h-0.5 bg-[#b3b3b3] ${app.active ? 'w-full' : 'w-10'}`} />}
          </button>
        ))}
      </div>
      <div className="ml-auto flex items-center text-white">
        <svg width="16" height="18" viewBox="0 0 16 18" fill="none" stroke="#fff" strokeWidth="1.300">
          <circle cx="11" cy="4" r="3" />
          <path d="M8 9c2-3 6-3 7 1" />
          <circle cx="5" cy="9" r="3" />
          <path d="M.5 16c1-5 8-5 9 0" />
        </svg>
        <svg width="12" height="8" viewBox="0 0 12 8" className="ml-6" fill="none" stroke="#fff" strokeWidth="1.500">
          <path d="M.5 7L6 1.500 11.500 7" />
        </svg>
        <svg width="16" height="12" viewBox="0 0 16 12" className="ml-2.5">
          <path d="M3 11.500a3 3 0 0 1 0-6C4 0 11 0 12 4c5 0 5 7 1 7.500z" fill="#f4f4f4" />
          <path d="M0 8c1-4 4-3 6-1L3 11z" fill="#a8a8a8" />
        </svg>
        <svg width="16" height="16" viewBox="0 0 16 16" className="ml-2">
          <path d="M3 3h2M8 2h2M12 4h1M2 7h2M7 7h2M12 9h1" stroke="#444" />
          <circle cx="8" cy="13" r="1.500" fill="#fff" />
          <circle cx="13" cy="13" r="1.500" fill="#fff" />
        </svg>
        <svg width="17" height="12" viewBox="0 0 17 12" className="ml-2" fill="none" stroke="#fff">
          <path d="M1.500 0v3M4.500 0v3M.5 3.500h5v2l-2 2v3h12v-8H7M15.500 5h1v3h-1" />
          <path d="M7 4h7v5H7z" fill="#fff" stroke="none" />
        </svg>
        <svg width="14" height="14" viewBox="0 0 14 14" className="ml-2.5" fill="none" stroke="#ddd" strokeWidth="1.300">
          <path d="M1 13C1 6 6 1 13 1M4 13c0-5 4-9 9-9M7 13c0-4 3-6 6-6M10 13c0-2 1-3 3-3" />
        </svg>
        <svg width="15" height="14" viewBox="0 0 15 14" className="ml-2" fill="none" stroke="#fff">
          <path d="M.5 4.500H3l3-3v11l-3-3H.5zM9 5l4 4M13 5L9 9" />
        </svg>
        <div className="flex w-[72px] flex-col items-center text-[11px] leading-[18px]">
          <span>7:26 AM</span>
          <span>8/12/2019</span>
        </div>
        <button aria-label="3 notifications" className="mr-3 ml-2">
          <svg width="24" height="26" viewBox="0 0 24 26">
            <path d="M0 1h16v12H8l-4 4v-4H0z" fill="#fff" />
            <path d="M3 4.500h10M3 7.500h10M3 10.500h7" stroke="#111" />
            <circle cx="15.500" cy="17" r="7.500" fill="#3c3c3c" stroke="#8a8a8a" />
            <text x="15.500" y="21" textAnchor="middle" fontSize="11" fill="#fff">3</text>
          </svg>
        </button>
        <div className="mr-1 h-10 w-px bg-[#6b6b6b]" />
      </div>
    </div>
  );
}

/* Browser window that shows around the edges of the application. */
function Backdrop() {
  return (
    <div className="col-start-1 row-start-1 flex flex-col bg-[#ececec]">
      <div className="flex h-[103px] flex-col bg-[#33373b]">
        <div className="h-[34px] bg-[#3f4448]">
          <div className="ml-2 h-3 w-60 rounded-t-lg bg-[#33363a]" />
        </div>
      </div>
      <div className="flex grow justify-between">
        <div className="w-2">
          <div className="h-[70px] bg-[#4b5340]" />
          <div className="h-[31px] border-b border-[#ccc] bg-[#f8f8f8]" />
        </div>
        <div className="w-2 bg-[#f1f1f1] pt-[17px]">
          <div className="h-[198px] w-1.5 bg-[#c1c1c1]" />
        </div>
      </div>
      <div className="flex h-2">
        <div className="w-[362px] border-r border-[#ccc]" />
        <div className="grow bg-white" />
        <div className="w-2.5 border-x border-[#ccc]" />
        <div className="w-[249px] bg-white" />
        <div className="w-[379px] border-l border-[#ccc]" />
      </div>
    </div>
  );
}

export default function App() {
  return (
    <div className="flex min-h-screen flex-col overflow-hidden font-['Open_Sans','Noto_Sans',sans-serif]">
      <div className="grid grow">
        <Backdrop />
        <div className="z-10 col-start-1 row-start-1 m-2 flex flex-col border border-[#a3a3a3] bg-[#555755]">
          <Header />
          <TabBar />
          <main className="relative grid grow bg-linear-to-b from-[#8696ad] to-[#c4c8d4]">
            <ModelView />
            <Callout name="dX:" value="0in" place="top-[449px] left-[767px]" color="bg-red-600 text-white" />
            <Callout name="dY:" value="0.097in" place="top-[458px] left-[750px]" color="bg-[#008000] text-black" />
            <Callout name="dZ:" value="0.4724in" place="top-[340px] left-[467px]" color="bg-[#0000ff] text-white" />
            <Callout name="Center Dist:" value="0.4823in" place="top-[564px] left-[409px]" color="bg-black text-white" />
            <ViewToolbar />
            <MeasurePanel />
          </main>
          <BottomToolbar />
        </div>
      </div>
      <Taskbar />
    </div>
  );
}
